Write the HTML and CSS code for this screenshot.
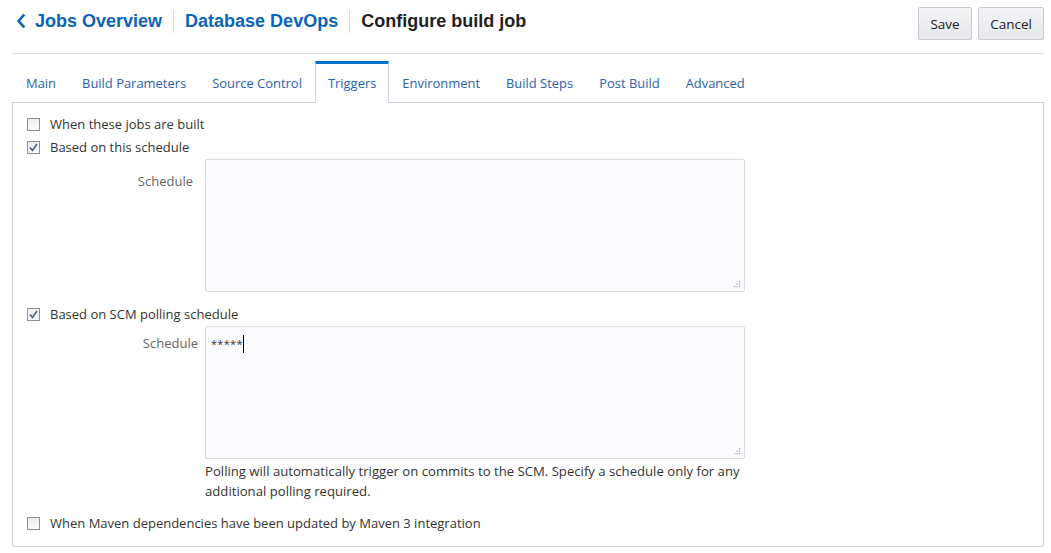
FILE: index.html
```html
<!DOCTYPE html>
<html>
<head>
<meta charset="utf-8">
<link rel="stylesheet" href="styles.css">
</head>
<body>
<div class="page">
  <header class="header">
    <nav class="crumbs">
      <a class="crumb back">
        <svg class="chev" width="10" height="14" viewBox="0 0 10 14"><polyline points="7.5,1.5 2.5,7 7.5,12.5" fill="none" stroke="#0a64b8" stroke-width="2.6" stroke-linecap="square"/></svg>
        Jobs Overview
      </a>
      <span class="sep"></span>
      <a class="crumb">Database DevOps</a>
      <span class="sep"></span>
      <span class="crumb current">Configure build job</span>
    </nav>
    <div class="actions">
      <button class="btn btn-save">Save</button>
      <button class="btn btn-cancel">Cancel</button>
    </div>
  </header>

  <ul class="tabs">
    <li class="tab">Main</li>
    <li class="tab">Build Parameters</li>
    <li class="tab">Source Control</li>
    <li class="tab active">Triggers</li>
    <li class="tab">Environment</li>
    <li class="tab">Build Steps</li>
    <li class="tab">Post Build</li>
    <li class="tab">Advanced</li>
  </ul>

  <section class="panel">
    <label class="check-row">
      <span class="cb"></span>
      <span>When these jobs are built</span>
    </label>
    <label class="check-row">
      <span class="cb checked"><svg width="9" height="9" viewBox="0 0 9 9"><polyline points="1,4.5 3.5,7.5 8,1" fill="none" stroke="#4a5a8c" stroke-width="1.6"/></svg></span>
      <span>Based on this schedule</span>
    </label>
    <div class="field field-one">
      <span class="field-label">Schedule</span>
      <div class="area">
        <svg class="grip" width="7" height="7" viewBox="0 0 7 7"><g fill="#9ea5ab"><rect x="5" y="0" width="1.2" height="1.2"/><rect x="2.5" y="2.5" width="1.2" height="1.2"/><rect x="5" y="2.5" width="1.2" height="1.2"/><rect x="0" y="5" width="1.2" height="1.2"/><rect x="2.5" y="5" width="1.2" height="1.2"/><rect x="5" y="5" width="1.2" height="1.2"/></g></svg>
      </div>
    </div>
    <label class="check-row row-scm">
      <span class="cb checked"><svg width="9" height="9" viewBox="0 0 9 9"><polyline points="1,4.5 3.5,7.5 8,1" fill="none" stroke="#4a5a8c" stroke-width="1.6"/></svg></span>
      <span>Based on SCM polling schedule</span>
    </label>
    <div class="field field-two">
      <span class="field-label">Schedule</span>
      <div class="area-wrap">
        <div class="area"><span class="area-text">*****</span><span class="caret"></span>
          <svg class="grip" width="7" height="7" viewBox="0 0 7 7"><g fill="#9ea5ab"><rect x="5" y="0" width="1.2" height="1.2"/><rect x="2.5" y="2.5" width="1.2" height="1.2"/><rect x="5" y="2.5" width="1.2" height="1.2"/><rect x="0" y="5" width="1.2" height="1.2"/><rect x="2.5" y="5" width="1.2" height="1.2"/><rect x="5" y="5" width="1.2" height="1.2"/></g></svg>
        </div>
        <p class="help">Polling will automatically trigger on commits to the SCM. Specify a schedule only for any<br>additional polling required.</p>
      </div>
    </div>
    <label class="check-row row-maven">
      <span class="cb"></span>
      <span>When Maven dependencies have been updated by Maven 3 integration</span>
    </label>
  </section>
</div>
</body>
</html>
```

FILE: styles.css
```css
* { box-sizing: border-box; }
html, body { margin: 0; padding: 0; background: #fff; }
body {
  font-family: "Open Sans", "Noto Sans", sans-serif;
  font-size: 13px;
  color: #333;
}
.page {
  padding: 0 7px 0 12px;
}
.header {
  height: 54px;
  border-bottom: 1px solid #d9e1e7;
  display: flex;
  justify-content: space-between;
  align-items: flex-start;
}
.crumbs {
  display: flex;
  align-items: center;
  padding-top: 9px;
  padding-left: 4px;
  height: 33px;
}
.crumb {
  font-family: "Liberation Sans", Arial, sans-serif;
  font-weight: bold;
  font-size: 18px;
  color: #0a64b8;
  text-decoration: none;
  display: flex;
  align-items: center;
  line-height: 23px;
}
.crumb.current { color: #1e1e1e; }
.chev { margin-right: 9px; margin-top: -1px; }
.sep {
  width: 1px;
  height: 23px;
  background: #d6dde3;
  margin: 0 11px 0 11px;
}
.actions {
  display: flex;
  gap: 6px;
  margin-top: 7px;
}
.btn {
  font-family: "Open Sans", "Noto Sans", sans-serif;
  font-size: 13.5px;
  color: #222;
  height: 33px;
  border: 1px solid #c4ccd3;
  border-radius: 2px;
  background: linear-gradient(#f2f4f5, #e6e9ec);
  padding: 0;
}
.btn-save { width: 54px; }
.btn-cancel { width: 66px; }

.tabs {
  list-style: none;
  margin: 7px 0 0 0;
  padding: 0 0 0 1px;
  display: flex;
  height: 41px;
  position: relative;
  z-index: 1;
}
.tab {
  padding: 0 13px;
  border-top: 3px solid transparent;
  line-height: 39px;
  height: 41px;
  color: #2a62ae;
  font-size: 12.95px;
}
.tab.active {
  border-top-color: #0572ce;
  border-left: 1px solid #c9d3dc;
  border-right: 1px solid #c9d3dc;
  padding: 0 12px;
  background: #fff;
  height: 42px;
}

.panel {
  border: 1px solid #c9d3dc;
  border-radius: 0 0 2px 2px;
  padding: 10px 14px 11px 14px;
}
.check-row {
  display: flex;
  align-items: center;
  height: 23px;
  line-height: 21px;
  color: #333;
}
.cb {
  width: 13px;
  height: 13px;
  border: 1px solid #8e8f8f;
  background: linear-gradient(#ededed, #fbfbfb);
  margin-right: 10px;
  display: flex;
  align-items: center;
  justify-content: center;
  flex: none;
}
.row-scm { margin-top: 11px; }
.row-maven { margin-top: 10px; }

.field {
  display: flex;
  align-items: flex-start;
}
.field-label {
  color: #666;
  line-height: 20px;
  text-align: right;
}
.field-one .field-label { width: 166px; padding-top: 12px; }
.field-two .field-label { width: 171px; padding-top: 7px; }
.field-one .area { margin-left: 12px; }
.field-two .area-wrap { margin-left: 7px; }
.area {
  position: relative;
  width: 540px;
  height: 133px;
  border: 1px solid #d8dde2;
  border-radius: 2px;
  background: #fafbfd;
  padding: 7px 5px;
  line-height: 20px;
  display: flex;
  align-items: flex-start;
}
.area-text {
  font-size: 11px;
  letter-spacing: 0.3px;
  color: #333;
}
.caret {
  display: inline-block;
  width: 1px;
  height: 18px;
  background: #000;
  margin-top: 1px;
}
.grip {
  position: absolute;
  right: 3px;
  bottom: 3px;
}
.help {
  margin: 2px 0 0 0;
  line-height: 20px;
  color: #333;
  white-space: nowrap;
  font-size: 13.15px;
}
.row-maven { margin-top: 11px; }
```
